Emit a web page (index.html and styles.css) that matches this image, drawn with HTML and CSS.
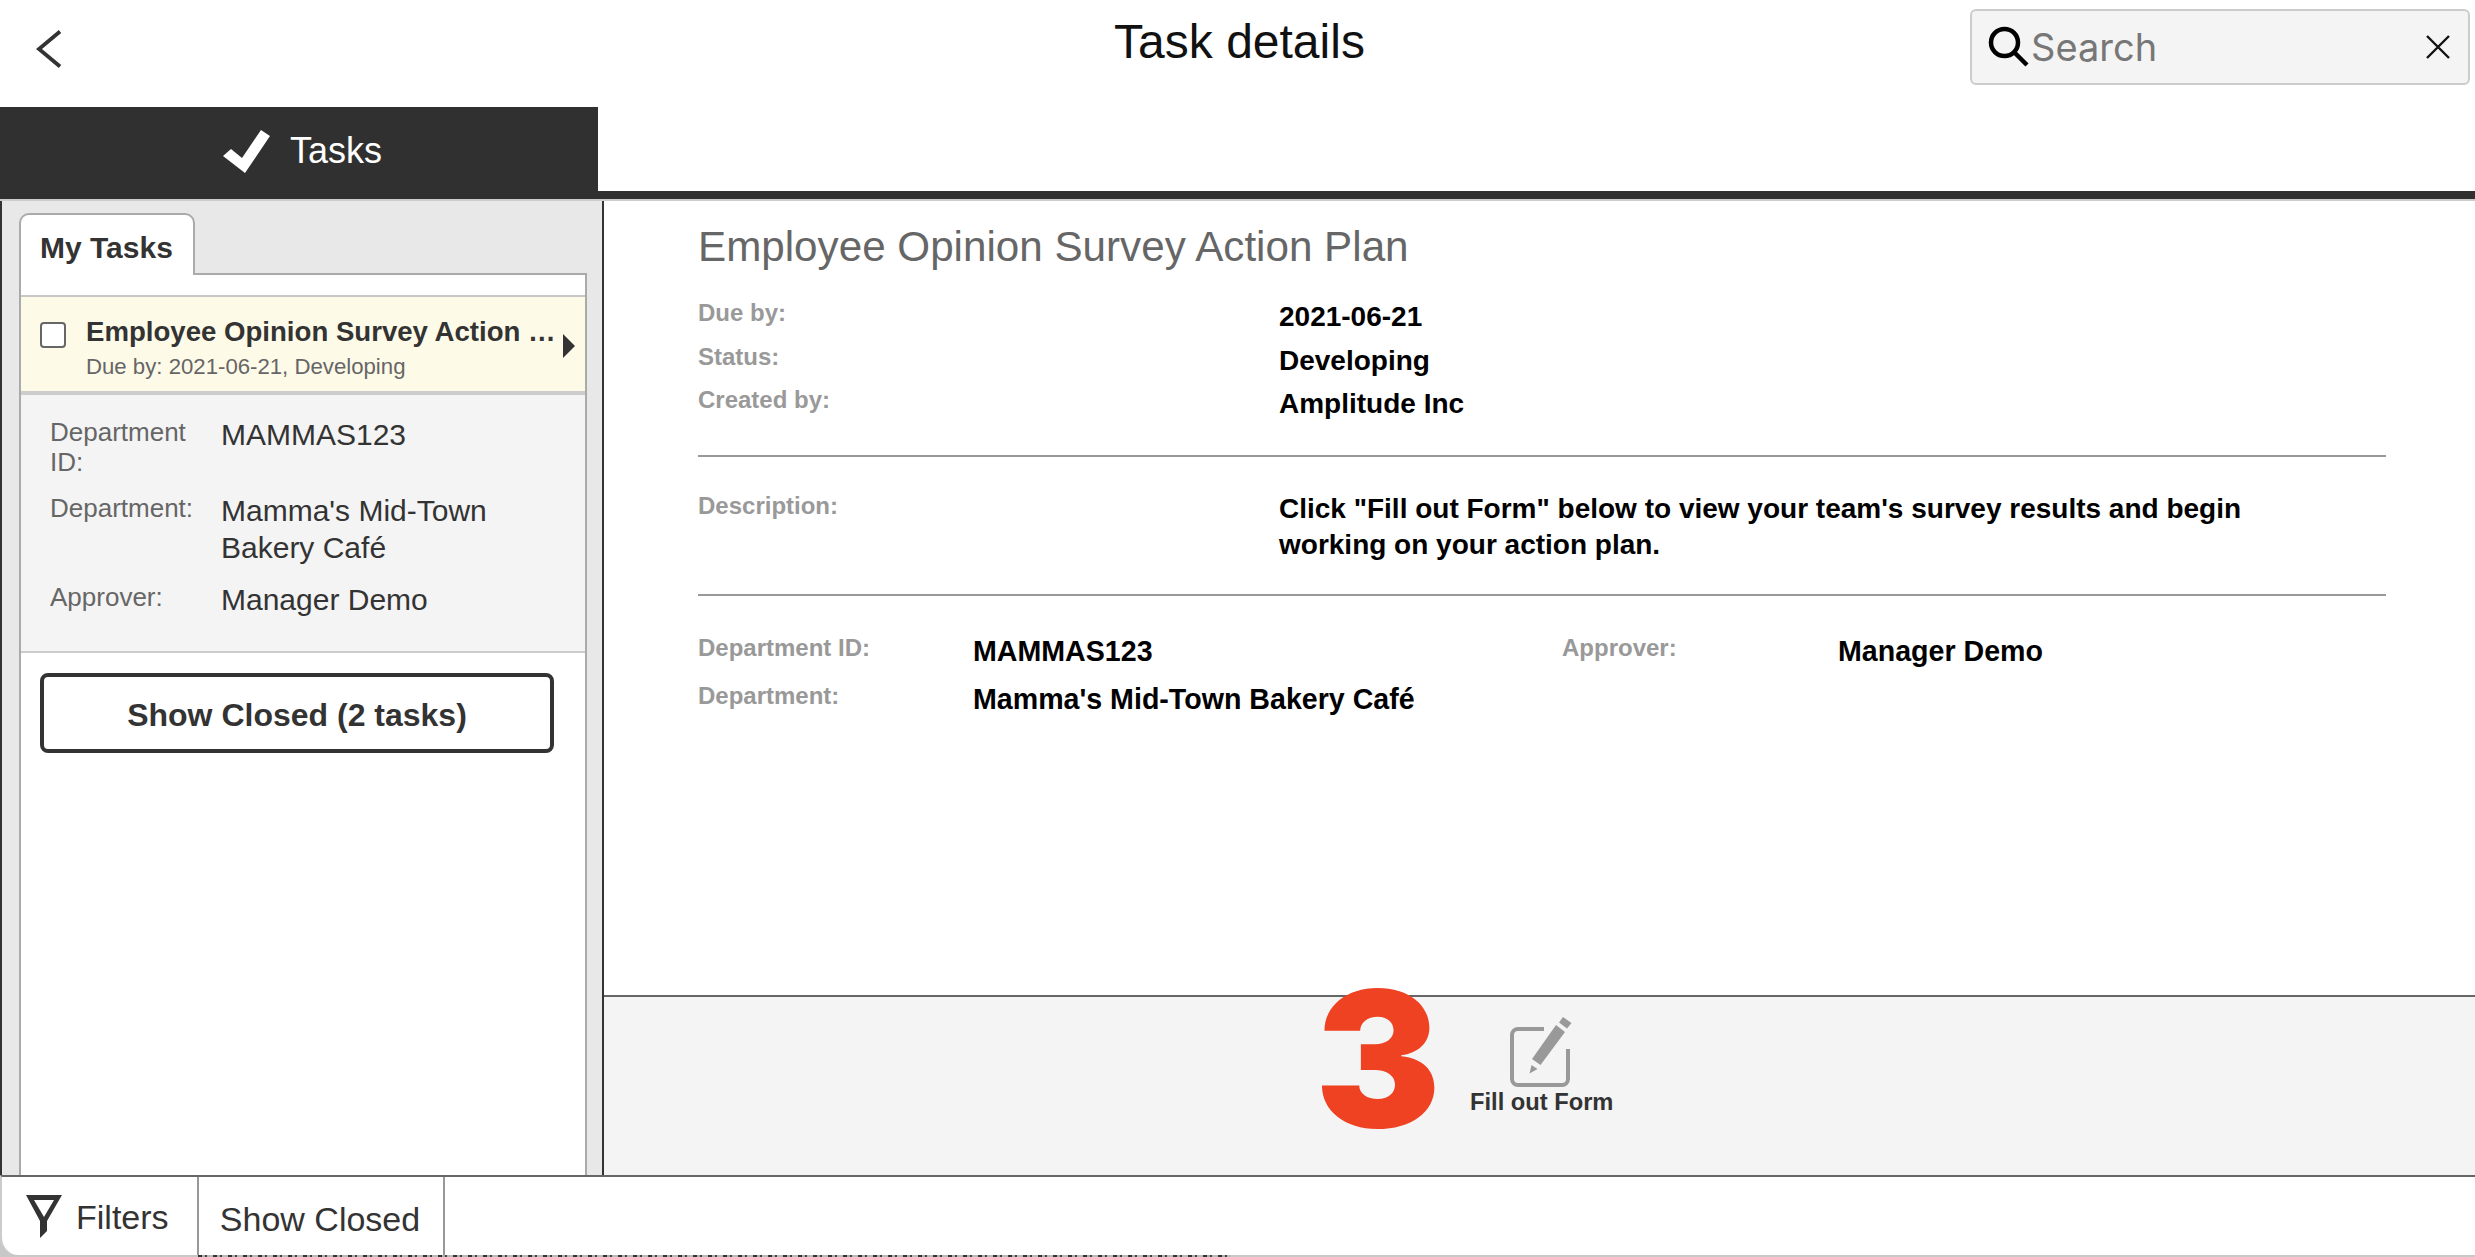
FILE: index.html
```html
<!DOCTYPE html>
<html lang="en">
<head>
<meta charset="utf-8">
<title>Task details</title>
<link rel="stylesheet" href="styles.css">
</head>
<body>
<div class="app">
  <header class="topbar">
    <button class="back" aria-label="Back">
      <svg width="26" height="38" viewBox="0 0 26 38"><path d="M24 1.500 3 19l21 17.500" fill="none" stroke="#333" stroke-width="3.800"/></svg>
    </button>
    <h1 class="page-title">Task details</h1>
    <div class="search">
      <svg class="search-icon" width="42" height="42" viewBox="0 0 42 42"><circle cx="16.500" cy="16.500" r="13.500" fill="none" stroke="#000" stroke-width="4.500"/><path d="M26 26l13 13" fill="none" stroke="#000" stroke-width="4.500"/></svg>
      <span class="search-text">Search</span>
      <svg class="search-clear" width="24" height="24" viewBox="0 0 24 24"><path d="M1 1l22 22M23 1 1 23" fill="none" stroke="#111" stroke-width="2.400"/></svg>
    </div>
  </header>

  <nav class="tabbar">
    <div class="tab-active">
      <svg width="48" height="44" viewBox="0 0 48 44"><path d="M1 27l8-7 11 9L39 1l9 6-25 37z" fill="#fff"/></svg>
      <span>Tasks</span>
    </div>
  </nav>

  <main class="main">
    <aside class="side">
      <div class="side-tab">My Tasks</div>
      <div class="side-box">
        <div class="task-row">
          <span class="checkbox"></span>
          <div class="task-text">
            <div class="task-name">Employee Opinion Survey Action …</div>
            <div class="task-sub">Due by: 2021-06-21, Developing</div>
          </div>
          <span class="task-arrow"></span>
        </div>
        <dl class="task-meta">
          <dt>Department ID:</dt><dd>MAMMAS123</dd>
          <dt>Department:</dt><dd>Mamma's Mid-Town Bakery Café</dd>
          <dt>Approver:</dt><dd>Manager Demo</dd>
        </dl>
        <div class="closed-wrap"><button class="closed-btn">Show Closed (2 tasks)</button></div>
      </div>
    </aside>

    <section class="detail">
      <div class="detail-body">
        <h2 class="detail-title">Employee Opinion Survey Action Plan</h2>
        <dl class="info">
          <dt>Due by:</dt><dd>2021-06-21</dd>
          <dt>Status:</dt><dd>Developing</dd>
          <dt>Created by:</dt><dd>Amplitude Inc</dd>
        </dl>
        <hr class="rule">
        <dl class="info desc">
          <dt>Description:</dt>
          <dd>Click "Fill out Form" below to view your team's survey results and begin working on your action plan.</dd>
        </dl>
        <hr class="rule">
        <dl class="fields">
          <dt>Department ID:</dt><dd>MAMMAS123</dd>
          <dt>Approver:</dt><dd>Manager Demo</dd>
          <dt>Department:</dt><dd class="wide">Mamma's Mid-Town Bakery Café</dd>
        </dl>
      </div>
      <div class="actions">
        <span class="step">3</span>
        <button class="action">
          <svg width="80" height="78" viewBox="0 0 80 78"><path d="M45 19H19a6 6 0 0 0-6 6v44a6 6 0 0 0 6 6h44a6 6 0 0 0 6-6V39" fill="none" stroke="#999" stroke-width="4"/><path d="M64 7l8.500 6-4.500 5.500-8-6zM57 15l9 7-24.500 33-8.500-6zM32.500 55l6 4-8 4.500z" fill="#999"/></svg>
          <span>Fill out Form</span>
        </button>
      </div>
    </section>
  </main>

  <div class="footer-wrap">
    <footer class="footer">
      <button class="foot-btn filters">
        <svg width="36" height="43" viewBox="0 0 36 43"><path fill-rule="evenodd" d="M0 0H36L21 26V36L14 43V26ZM8 5H28L18 22Z" fill="#333"/></svg>
        <span>Filters</span>
      </button>
      <button class="foot-btn closed">Show Closed</button>
    </footer>
    <div class="peek"></div>
  </div>
</div>
</body>
</html>
```

FILE: styles.css
```css
* { box-sizing: border-box; }
html, body { margin: 0; height: 100%; }
body { background: #fff; overflow: hidden; font-family: "Liberation Sans", Arial, sans-serif; color: #333; }
button { font: inherit; color: inherit; background: none; border: 0; padding: 0; }
h1, h2, dl, dd { margin: 0; font-weight: normal; }
.app { height: 1257px; display: flex; flex-direction: column; }

.topbar { height: 107px; display: grid; grid-template-columns: 1fr auto 1fr; align-items: start; }
.back { justify-self: start; margin: 30px 0 0 36px; line-height: 0; }
.page-title { font-size: 48px; line-height: 56px; color: #111; margin: 14px 0 0 4px; }
.search { justify-self: end; width: 500px; height: 76px; margin: 9px 5px 0 0; background: #f4f4f4; border: 2px solid #ccc; border-radius: 6px; display: flex; align-items: center; padding: 0 18px 0 16px; }
.search-icon { flex: none; }
.search-text { flex: 1; font-family: Inter, "Liberation Sans", sans-serif; font-size: 38px; color: #777; margin-left: 1px; }
.search-clear { flex: none; }

.tabbar { height: 94px; border-bottom: 2px solid #ccc; position: relative; }
.tabbar::before { content: ""; display: block; height: 8px; background: #303030; margin-top: 84px; }
.tab-active { position: absolute; left: 0; top: 0; width: 598px; height: 92px; padding: 0 0 5px 6px; background: #303030; color: #fff; display: flex; align-items: center; justify-content: center; gap: 20px; font-size: 36px; }

.main { flex: 1; display: flex; min-height: 0; }
.side { width: 604px; flex: none; background: #e8e8e8; border-left: 2px solid #333; border-right: 2px solid #333; padding: 12px 15px 0 17px; display: flex; flex-direction: column; }
.side-tab { width: 176px; height: 62px; margin-bottom: -2px; background: #fff; border: 2px solid #aaa; border-bottom: 0; border-radius: 10px 10px 0 0; font-weight: bold; font-size: 30px; line-height: 66px; padding-left: 19px; position: relative; z-index: 1; }
.side-box { flex: 1; background: #fff; border: 2px solid #aaa; border-bottom: 0; padding-top: 20px; }
.task-row { height: 100px; background: #fefae8; border-top: 2px solid #c8c8c8; border-bottom: 4px solid #ccc; display: flex; align-items: flex-start; padding: 18px 0 0 19px; position: relative; }
.checkbox { flex: none; width: 26px; height: 26px; margin-top: 7px; background: #fff; border: 2px solid #666; border-radius: 4px; }
.task-text { margin-left: 20px; width: 490px; }
.task-name { font-weight: bold; font-size: 27.6px; line-height: 34px; white-space: nowrap; }
.task-sub { font-size: 22.2px; line-height: 26px; color: #666; margin-top: 5px; }
.task-arrow { position: absolute; right: 10px; top: 37px; border-left: 12px solid #333; border-top: 12px solid transparent; border-bottom: 12px solid transparent; }
.task-meta { background: #f4f4f4; border-bottom: 2px solid #ccc; display: grid; grid-template-columns: 171px 1fr; padding: 22px 30px 33px 29px; row-gap: 16px; }
.task-meta dt { font-size: 26px; line-height: 30px; color: #666; }
.task-meta dd { font-size: 30px; line-height: 37px; color: #333; margin-top: -1px; }
.closed-wrap { padding: 20px 31px 0 19px; }
.closed-btn { display: block; width: 100%; height: 80px; padding-top: 4px; background: #fff; border: 4px solid #333; border-radius: 8px; font-weight: bold; font-size: 32px; }

.detail { flex: 1; min-width: 0; display: flex; flex-direction: column; }
.detail-body { flex: 1; padding: 19px 89px 0 94px; }
.detail-title { font-size: 42.2px; line-height: 54px; color: #666; margin-bottom: 25px; }
.info { display: grid; grid-template-columns: 581px 1fr; row-gap: 7.5px; }
.info dt { font-weight: bold; font-size: 24px; line-height: 30px; color: #999; margin-top: -1px; }
.info dd { font-weight: bold; font-size: 28px; line-height: 36px; color: #000; }
.rule { height: 2px; margin: 33px 0 34px; background: #999; border: 0; }
.desc { margin-bottom: -2px; }
.desc dt { padding-top: 1px; }
.desc dd { width: 1000px; }
.fields { display: grid; grid-template-columns: 275px 589px 276px 1fr; row-gap: 12px; padding-top: 3px; }
.fields dt { font-weight: bold; font-size: 24px; line-height: 30px; color: #999; }
.fields dd { font-weight: bold; font-size: 28.6px; line-height: 36px; color: #000; }
.fields .wide { grid-column: 2 / 5; }
.actions { height: 180px; background: #f4f4f4; border-top: 2px solid #666; display: flex; align-items: flex-start; padding-left: 866px; position: relative; }
.step { position: absolute; left: 711px; top: -33px; font-family: Inter, "Liberation Sans", sans-serif; font-weight: 900; font-size: 188px; line-height: 190px; color: #ee4223; }
.action { display: flex; flex-direction: column; align-items: center; font-weight: bold; font-size: 23.7px; padding-top: 13px; line-height: 28px; }
.action svg { display: block; margin-left: -6px; }

.footer-wrap { height: 82px; background: #c8c8c8; position: relative; }
.footer { height: 80px; border-top: 2px solid #666; border-left: 2px solid #ccc; display: flex; background: #fff; border-bottom-left-radius: 18px; }
.foot-btn { height: 100%; font-size: 34px; color: #333; border-right: 2px solid #999; }
.filters { width: 197px; display: flex; align-items: center; gap: 14px; padding: 0 0 0 24px; }
.filters span { padding-top: 3px; }
.closed { width: 246px; padding: 6px 2px 0 0; }
.peek { position: absolute; left: 198px; top: 80px; width: 1033px; height: 2px; background: repeating-linear-gradient(90deg, #333 0 4px, #aaa 4px 7px, #444 7px 9px, #bbb 9px 15px); }
```
